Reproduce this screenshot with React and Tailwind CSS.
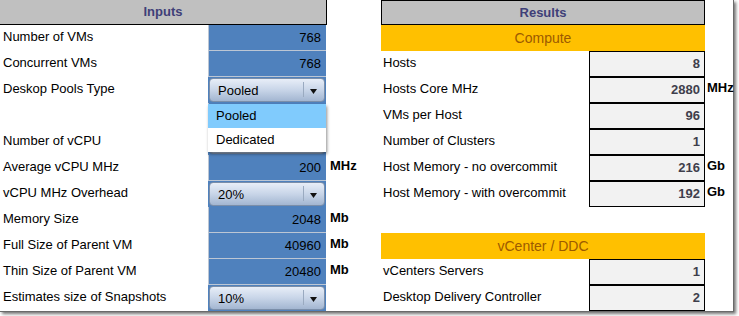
import React from 'react';

const inputs = [
  { label: 'Number of VMs', value: '768' },
  { label: 'Concurrent VMs', value: '768' },
  { label: 'Deskop Pools Type', select: 'Pooled' },
  { label: '', value: '' },
  { label: 'Number of vCPU', select: ' ' },
  { label: 'Average vCPU MHz', value: '200', unit: 'MHz' },
  { label: 'vCPU MHz Overhead', select: '20%' },
  { label: 'Memory Size', value: '2048', unit: 'Mb' },
  { label: 'Full Size of Parent VM', value: '40960', unit: 'Mb' },
  { label: 'Thin Size of Parent VM', value: '20480', unit: 'Mb' },
  { label: 'Estimates size of Snapshots', select: '10%' },
];

const compute = [
  { label: 'Hosts', value: '8' },
  { label: 'Hosts Core MHz', value: '2880', unit: 'MHz' },
  { label: 'VMs per Host', value: '96' },
  { label: 'Number of Clusters', value: '1' },
  { label: 'Host Memory - no overcommit', value: '216', unit: 'Gb' },
  { label: 'Host Memory - with overcommit', value: '192', unit: 'Gb' },
];

const vcenter = [
  { label: 'vCenters Servers', value: '1' },
  { label: 'Desktop Delivery Controller', value: '2' },
];

const Dropdown = ({ value }) => (
  <div className="h-full bg-[#4f81bd] p-px">
    <div className="relative h-full rounded-[4px] border border-[#7b8ea9] bg-linear-to-b from-[#e8eef8] via-[#c8d5e8] to-[#a3b6d1] flex items-center pl-[8px] pt-px text-[13px] text-black">
      {value}
      <div className="absolute right-[20px] top-[3px] bottom-[4px] w-px bg-[#9aaac0]" />
      <svg className="absolute right-[7px] top-[10px]" width="7" height="5" viewBox="0 0 7 5">
        <polygon points="0,0 7,0 3.5,5" fill="#111" />
      </svg>
    </div>
  </div>
);

const InputRow = ({ item }) => (
  <div className="flex h-[26px]">
    <div className="w-[208px] shrink-0 pl-[3px] pb-[3px] flex items-center text-[13px] text-black">{item.label}</div>
    <div className="w-[118px] shrink-0 h-full">
      {item.select ? (
        <Dropdown value={item.select.trim()} />
      ) : (
        <div className="h-full bg-[#4f81bd] border-l border-b border-[#bcc6d4] flex items-center justify-end pr-[5px] text-[13px] text-black">
          {item.value}
        </div>
      )}
    </div>
    <div className="pl-[4px] pb-[4px] flex items-center text-[13px] font-bold text-black">{item.unit}</div>
  </div>
);

const ResultRow = ({ item }) => (
  <div className="flex h-[26px]">
    <div className="w-[208px] shrink-0 pl-[2px] pb-[3px] flex items-center text-[13px] text-black">{item.label}</div>
    <div className="w-[116px] shrink-0 h-full border border-black bg-[#f2f2f2] flex items-center justify-end pr-[4px] text-[13px] font-bold text-[#3f3f4c]">
      {item.value}
    </div>
    <div className="pl-[2px] pb-[4px] flex items-center text-[13px] font-bold text-black">{item.unit}</div>
  </div>
);

export default function App() {
  return (
    <div className="w-[739px] h-[316px] bg-white font-['Liberation_Sans',Arial,sans-serif]">
      <div className="w-[734px] h-[312px] bg-white border-r border-b border-[#6a6a6a] shadow-[2px_2px_3px_rgba(0,0,0,0.55)] flex">
        {/* Inputs */}
        <div className="relative w-[381px] shrink-0 flex flex-col">
          <div className="w-[327px] h-[25px] bg-[#c0c0c0] border-b border-r border-black flex items-center justify-center text-[13px] font-bold text-[#3f3f78]">
            Inputs
          </div>
          {inputs.map((item, i) => (
            <InputRow key={i} item={item} />
          ))}

          {/* open select list */}
          <div className="absolute left-[208px] top-[104px] w-[118px] h-[48px] bg-white shadow-[1px_2px_3px_rgba(0,0,0,0.45)] text-[13px] text-black">
            <div className="h-[24px] bg-[#80cbfd] pl-[8px] flex items-center">Pooled</div>
            <div className="h-[24px] pl-[8px] flex items-center">Dedicated</div>
          </div>
        </div>

        {/* Results */}
        <div className="flex-1 flex flex-col">
          <div className="w-[324px] h-[25px] bg-[#c0c0c0] border border-black flex items-center justify-center text-[13px] font-bold text-[#3f3f78]">
            Results
          </div>
          <div className="w-[324px] h-[26px] bg-[#ffc000] flex items-center justify-center text-[14px] text-[#9c5a00]">
            Compute
          </div>
          {compute.map((item, i) => (
            <ResultRow key={i} item={item} />
          ))}
          <div className="h-[26px]" />
          <div className="w-[324px] h-[26px] bg-[#ffc000] flex items-center justify-center text-[14px] text-[#9c5a00]">
            vCenter / DDC
          </div>
          {vcenter.map((item, i) => (
            <ResultRow key={i} item={item} />
          ))}
        </div>
      </div>
    </div>
  );
}
